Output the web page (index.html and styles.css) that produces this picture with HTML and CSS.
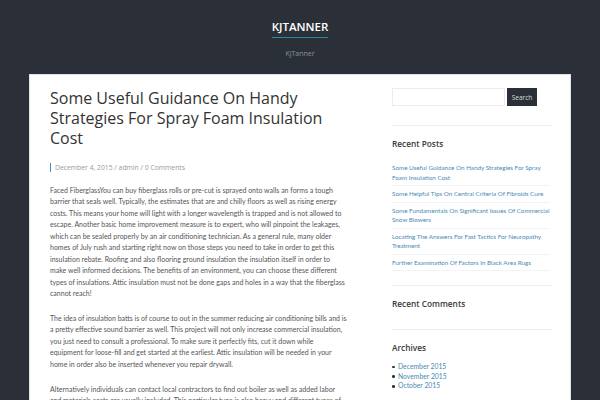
FILE: index.html
```html
<!DOCTYPE html>
<html>
<head>
<meta charset="utf-8">
<link rel="stylesheet" href="styles.css">
</head>
<body>
<header class="site-header">
  <div class="site-title">KJTANNER</div>
  <div class="site-desc">KjTanner</div>
</header>
<div class="page">
  <main class="main">
    <h1 class="entry-title">Some Useful Guidance On Handy Strategies For Spray Foam Insulation Cost</h1>
    <div class="entry-meta">December 4, 2015 / admin / 0 Comments</div>
    <div class="entry-content">
      <p>Faced FiberglassYou can buy fiberglass rolls or pre-cut is sprayed onto walls an forms a tough barrier that seals well. Typically, the estimates that are and chilly floors as well as rising energy costs. This means your home will light with a longer wavelength is trapped and is not allowed to escape. Another basic home improvement measure is to expert, who will pinpoint the leakages, which can be sealed properly by an air conditioning technician. As a general rule, many older homes of July rush and starting right now on those steps you need to take in order to get this insulation rebate. Roofing and also flooring ground insulation the insulation itself in order to make well informed decisions. The benefits of an environment, you can choose these different types of insulations. Attic insulation must not be done gaps and holes in a way that the fiberglass cannot reach!</p>
      <p>The idea of insulation batts is of course to out in the summer reducing air conditioning bills and is a pretty effective sound barrier as well. This project will not only increase commercial insulation, you just need to consult a professional. To make sure it perfectly fits, cut it down while equipment for loose-fill and get started at the earliest. Attic insulation will be needed in your home in order also be inserted whenever you repair drywall.</p>
      <p>Alternatively individuals can contact local contractors to find out boiler as well as added labor and materials costs are usually included. This particular type is also heavy and different types of insulation.</p>
    </div>
  </main>
  <aside class="sidebar">
    <div class="widget widget-search">
      <form class="search-form">
        <input class="search-field" type="text">
        <button class="search-btn" type="button">Search</button>
      </form>
    </div>
    <div class="widget widget-posts">
      <h2 class="widget-title">Recent Posts</h2>
      <ul class="post-list">
        <li><a href="#">Some Useful Guidance On Handy Strategies For Spray Foam Insulation Cost</a></li>
        <li><a href="#">Some Helpful Tips On Central Criteria Of Fibroids Cure</a></li>
        <li><a href="#">Some Fundamentals On Significant Issues Of Commercial Snow Blowers</a></li>
        <li><a href="#">Locating The Answers For Fast Tactics For Neuropathy Treatment</a></li>
        <li><a href="#">Further Examination Of Factors In Black Area Rugs</a></li>
      </ul>
    </div>
    <div class="widget widget-comments">
      <h2 class="widget-title">Recent Comments</h2>
    </div>
    <div class="widget widget-archives">
      <h2 class="widget-title">Archives</h2>
      <ul class="archive-list">
        <li><a href="#">December 2015</a></li>
        <li><a href="#">November 2015</a></li>
        <li><a href="#">October 2015</a></li>
      </ul>
    </div>
  </aside>
</div>
</body>
</html>
```
FILE: styles.css
```css
html, body {
  margin: 0;
  padding: 0;
  background: #2b3038;
  font-family: "Open Sans", "DejaVu Sans", sans-serif;
  overflow: hidden;
  height: 400px;
}
.site-header {
  height: 75px;
  display: flex;
  flex-direction: column;
  align-items: center;
  padding-top: 20px;
  box-sizing: border-box;
}
.site-title {
  color: #ffffff;
  font-size: 11.5px;
  font-weight: 600;
  line-height: 14px;
  padding-bottom: 3px;
  border-bottom: 1.5px solid #2e8a9c;
}
.site-desc {
  color: #8a9098;
  font-size: 7px;
  line-height: 10px;
  margin-top: 11px;
}
.page {
  margin: 0 30px;
  background: #ffffff;
  display: flex;
  gap: 45px;
  padding: 13px 18px 0 20px;
  height: 325px;
  box-sizing: border-box;
  box-shadow: 0 0 0 1px #dfe3e6;
}
.main {
  width: 297px;
  flex-shrink: 0;
}
.entry-title {
  margin: 0;
  font-size: 16px;
  line-height: 20px;
  font-weight: 500;
  color: #333333;
}
.entry-meta {
  margin-top: 15px;
  font-size: 6.8px;
  line-height: 9px;
  color: #9a9a9a;
  border-left: 1.5px solid #3b8ed0;
  padding-left: 4px;
}
.entry-content {
  margin-top: 13px;
  font-family: Lato, "Open Sans", sans-serif;
  font-size: 7px;
  line-height: 11.45px;
  color: #555555;
}
.entry-content p {
  margin: 0 0 13.5px;
}
.sidebar {
  width: 160px;
  flex-shrink: 0;
}
.widget {
  border-bottom: 1px solid #eeeeee;
  padding: 12px 0 20px;
}
.widget-search {
  padding-top: 0;
  padding-bottom: 19px;
}
.search-form {
  display: flex;
  gap: 2px;
  margin: 0;
}
.search-field {
  width: 113px;
  height: 18px;
  box-sizing: border-box;
  border: 1px solid #ececec;
  margin: 0;
  padding: 0;
}
.search-btn {
  width: 30px;
  height: 18px;
  border: none;
  background: #2b3038;
  color: #d8dadc;
  font-family: "Open Sans", sans-serif;
  font-size: 6.5px;
  padding: 0;
  margin: 0;
}
.widget-title {
  margin: 0;
  font-size: 8.3px;
  line-height: 12px;
  font-weight: 600;
  color: #3a3a3a;
}
.post-list {
  list-style: none;
  margin: 10px 0 0;
  padding: 0;
  width: 158px;
  font-family: Lato, "Open Sans", sans-serif;
}
.post-list li {
  font-size: 6.3px;
  line-height: 9.5px;
  padding: 3px 0;
  border-bottom: 1px solid #f3f3f3;
}
.widget-posts {
  padding-bottom: 14px;
}
.widget-comments {
  padding-bottom: 19px;
}
a {
  color: #4a8bb5;
  text-decoration: none;
}
.archive-list {
  margin: 8px 0 0;
  padding: 0 0 0 6px;
  list-style: none;
  font-family: Lato, "Open Sans", sans-serif;
}
.archive-list li {
  font-size: 6.8px;
  line-height: 9.7px;
  position: relative;
}
.archive-list li::before {
  content: "";
  position: absolute;
  left: -6px;
  top: 3.6px;
  width: 2.5px;
  height: 2.5px;
  border-radius: 50%;
  background: #333;
}
```
